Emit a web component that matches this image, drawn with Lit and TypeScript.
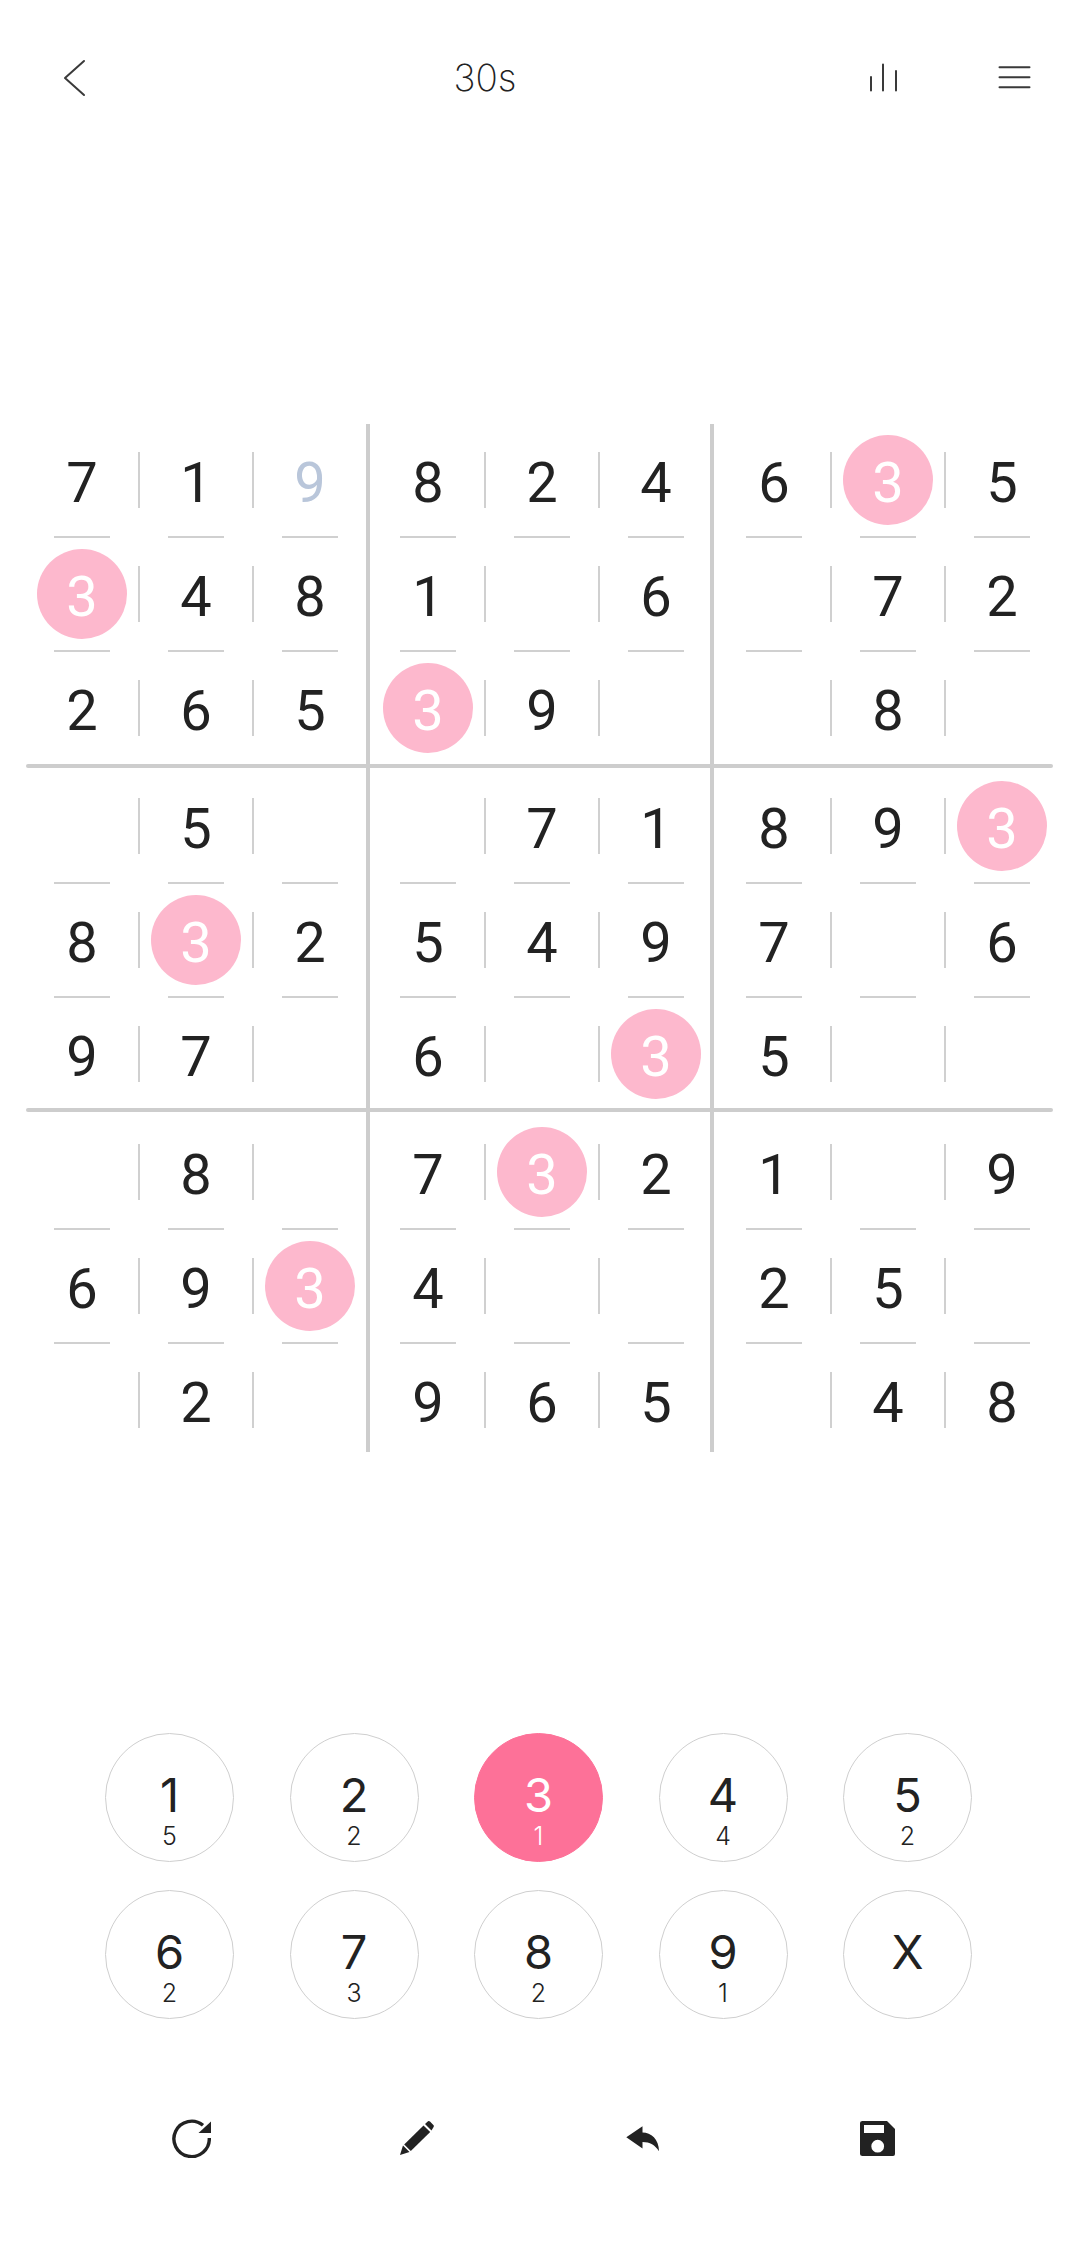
import { LitElement, html, css, svg } from "lit";
import { customElement } from "lit/decorators.js";

const BOARD = [
  "719824635",
  "348106072",
  "265390080",
  "050071893",
  "832549706",
  "970603500",
  "080732109",
  "693400250",
  "020965048",
];
const KEYS: [string, string][] = [
  ["1", "5"], ["2", "2"], ["3", "1"], ["4", "4"], ["5", "2"],
  ["6", "2"], ["7", "3"], ["8", "2"], ["9", "1"], ["X", ""],
];

@customElement("app-root")
export class AppRoot extends LitElement {
  static styles = css`
    :host { display: block; width: 1080px; height: 2257px; background: #fff; color: #222; overflow: hidden; font-family: "Roboto", sans-serif; }
    svg { display: block; width: 40px; height: 40px; }
    .stroke { fill: none; stroke: #3a3a3a; stroke-width: 2; stroke-linecap: round; stroke-linejoin: round; }
    .fill { fill: #222; }

    .header { display: flex; align-items: center; height: 156px; padding-left: 55px; }
    .timer { width: 200px; margin-left: 290px; text-align: center; font: 200 37px/40px "Inter", sans-serif; color: #222; }
    .stats { margin-left: 278px; }
    .menu { margin-left: 92px; }

    .board { margin-top: 267px; padding-left: 25px; }
    .band { display: flex; height: 342px; }
    .block { display: grid; grid-template-columns: repeat(3, 114px); grid-template-rows: repeat(3, 114px); width: 342px; }
    .cell { position: relative; display: flex; align-items: center; justify-content: center; font-size: 56px; line-height: 1; color: #222; }
    .cell.vl::after { content: ""; position: absolute; right: -1px; top: 29px; width: 2px; height: 56px; background: #d0d0d0; }
    .cell.hl::before { content: ""; position: absolute; left: 29px; bottom: -1px; width: 56px; height: 2px; background: #d0d0d0; }
    .num { padding-top: 6px; }
    .hint { color: #b9c6da; }
    .mark { display: flex; align-items: center; justify-content: center; width: 90px; height: 90px; border-radius: 50%; background: #fdb8cd; color: #fff; }
    .mark .num { padding-top: 5px; }

    .v { width: 4px; background: #cdcdcd; }
    .v.a { margin-left: -1px; margin-right: 1px; }
    .v.b { margin-left: -3px; margin-right: 3px; }
    .band.r0 .v { margin-top: 1px; }
    .band.r1 .v { margin-top: -1px; margin-bottom: -1px; }
    .band.r2 .v { margin-top: -3px; margin-bottom: 5px; }
    .h { width: 1027px; margin-left: 1px; height: 4px; border-radius: 2px; background: #cdcdcd; }
    .h.a { margin-top: -1px; margin-bottom: 1px; }
    .h.b { margin-top: -3px; margin-bottom: 3px; }

    .keys { display: grid; grid-template-columns: repeat(5, 129px); grid-auto-rows: 129px; column-gap: 55.5px; row-gap: 28px; margin-top: 276px; padding-left: 105px; }
    .key { box-sizing: border-box; display: flex; flex-direction: column; align-items: center; padding-top: 37px; border: 1px solid #cfcfcf; border-radius: 50%; font-family: "Inter", sans-serif; color: #222; }
    .key .d { font-size: 47px; line-height: 47px; font-weight: 400; }
    .key .c { margin-top: 6px; font-size: 25px; line-height: 25px; font-weight: 300; }
    .key.on { background: #fd7198; border-color: #fd7198; color: #fff; }

    .tools { display: grid; grid-template-columns: 226px 226px 234px 40px; margin-top: 99px; padding-left: 171px; }
  `;

  private cell(r: number, c: number) {
    const v = BOARD[r][c];
    const cls = ["cell", c % 3 < 2 ? "vl" : "", r % 3 < 2 ? "hl" : ""].join(" ");
    const text = v === "0" ? "" : v;
    if (v === "3") return html`<div class=${cls}><span class="mark"><span class="num">3</span></span></div>`;
    return html`<div class=${cls}><span class="num ${r === 0 && c === 2 ? "hint" : ""}">${text}</span></div>`;
  }

  private block(br: number, bc: number) {
    const cells = [];
    for (let r = 0; r < 3; r++) for (let c = 0; c < 3; c++) cells.push(this.cell(br * 3 + r, bc * 3 + c));
    return html`<div class="block">${cells}</div>`;
  }

  private band(br: number) {
    return html`<div class="band r${br}">
      ${this.block(br, 0)}<div class="v a"></div>
      ${this.block(br, 1)}<div class="v b"></div>
      ${this.block(br, 2)}
    </div>`;
  }

  render() {
    return html`
      <div class="header">
        <svg viewBox="0 0 40 40"><path class="stroke" d="M29 3 L10 20 L29 37"/></svg>
        <div class="timer">30s</div>
        <svg class="stats" viewBox="0 0 40 40"><path class="stroke" d="M8 19 V32.5 M20 6.5 V32.5 M33 13 V32.5"/></svg>
        <svg class="menu" viewBox="0 0 40 40"><path class="stroke" d="M4.5 9.3 H34.5 M4.5 19.3 H34.5 M4.5 29.3 H34.5"/></svg>
      </div>
      <div class="board">
        ${this.band(0)}<div class="h a"></div>
        ${this.band(1)}<div class="h b"></div>
        ${this.band(2)}
      </div>
      <div class="keys">
        ${KEYS.map(([d, c]) => html`<div class="key ${d === "3" ? "on" : ""}"><span class="d">${d}</span><span class="c">${c}</span></div>`)}
      </div>
      <div class="tools">
        <svg viewBox="0 0 40 40">
          <path d="M38.3 20 A17.7 17.7 0 1 1 32 7.3" fill="none" stroke="#222" stroke-width="3.4"/>
          <path class="fill" d="M27.5 15 H40 V3.5 Z"/>
        </svg>
        <svg viewBox="0 0 40 40">
          ${svg`<path class="fill" d="M3 37 L6 27.5 L12.5 34 Z"/>
          <path class="fill" d="M7.2 26.4 L26.5 7.5 L33.2 14 L13.8 33 Z"/>
          <path class="fill" d="M28 6 L31 3.2 Q32 2.6 33 3.5 L36.6 7.2 Q37.2 8 36.6 9 L34.5 12.5 Z"/>`}
        </svg>
        <svg viewBox="0 0 40 40">
          <path class="fill" d="M3.3 19.3 L19.5 8.3 V14.5 C28 14.5 36 21 36 33.3 C32 27 27 24 19.5 24 V30.5 Z"/>
        </svg>
        <svg viewBox="0 0 40 40">
          <path class="fill" fill-rule="evenodd" d="M5.5 3 H30 L38 11 V36 Q38 38 36 38 H5.5 Q3 38 3 36 V5 Q3 3 5.5 3 Z M7 7 V15 H27 V7 Z M20.7 21.8 A6.4 6.4 0 1 0 20.7 34.6 A6.4 6.4 0 1 0 20.7 21.8 Z"/>
        </svg>
      </div>
    `;
  }
}
